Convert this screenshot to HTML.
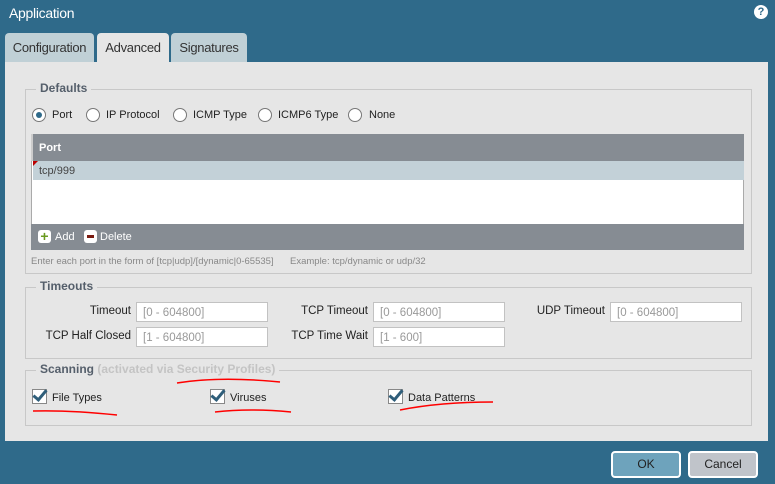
<html><head><style>
body{margin:0;width:775px;height:484px;background:#2f6a8a;font-family:"Liberation Sans",sans-serif;position:relative;overflow:hidden;font-size:11px;color:#222}
.a{position:absolute}
.tab{position:absolute;top:33px;height:29px;background:#c0d0d6;border-radius:4px 4px 0 0;font-size:13px;color:#333;text-align:center;line-height:29px;letter-spacing:-0.3px}
.fs{position:absolute;border:1px solid #c8c8c8}
.lg{position:absolute;top:-9px;left:10px;background:#e6e6e6;padding:0 4px;font-weight:bold;color:#555f6b;font-size:12px}
.rad{position:absolute;width:12px;height:12px;border:1px solid #777;border-radius:50%;background:#fff}
.inp{position:absolute;background:#fff;border:1px solid #c2c2c2;height:20px;line-height:20px;color:#999;padding-left:6px;box-sizing:border-box;font-size:11.5px}
.lbl{position:absolute;text-align:right;font-size:11.5px;color:#222}
.cb{position:absolute;width:13px;height:13px;border:1px solid #888;background:#fff}
.cb:after{content:"";position:absolute;left:3px;top:-3px;width:5px;height:11px;border:solid #2f5e7a;border-width:0 3px 3px 0;transform:rotate(40deg)}
.btn{position:absolute;top:451px;height:27px;border:2px solid #fff;border-radius:4px;box-sizing:border-box;text-align:center;line-height:23px;font-size:12px}
</style></head><body>
<div class="a" style="left:9px;top:5px;color:#fff;font-size:14px;letter-spacing:-0.3px">Application</div>
<div class="a" style="left:754px;top:5px;width:14px;height:14px;border-radius:50%;background:#fff;color:#2f6a8a;font-weight:bold;font-size:11px;text-align:center;line-height:14px">?</div>
<div class="tab" style="left:5px;width:89px">Configuration</div>
<div class="tab" style="left:97px;width:72px;background:#e6e6e6;height:30px">Advanced</div>
<div class="tab" style="left:171px;width:76px">Signatures</div>
<div class="a" style="left:5px;top:62px;width:763px;height:379px;background:#e6e6e6"></div>

<div class="fs" style="left:25px;top:89px;width:725px;height:183px"><div class="lg">Defaults</div></div>
<div class="rad" style="left:32px;top:108px"><div class="a" style="left:3px;top:3px;width:6px;height:6px;border-radius:50%;background:#2f6a8a"></div></div>
<div class="a" style="left:52px;top:109px">Port</div>
<div class="rad" style="left:86px;top:108px"></div><div class="a" style="left:106px;top:109px">IP Protocol</div>
<div class="rad" style="left:173px;top:108px"></div><div class="a" style="left:193px;top:109px">ICMP Type</div>
<div class="rad" style="left:258px;top:108px"></div><div class="a" style="left:278px;top:109px">ICMP6 Type</div>
<div class="rad" style="left:348px;top:108px"></div><div class="a" style="left:369px;top:109px">None</div>

<div class="a" style="left:31px;top:134px;width:713px;height:116px;background:#fff;border:1px solid #aaa;box-sizing:border-box"></div>
<div class="a" style="left:31px;top:134px;width:713px;height:27px;background:#868c93;color:#fff;font-weight:bold;line-height:28px;text-indent:6px;font-size:11px;border-left:2px solid #ccc;box-sizing:border-box">Port</div>
<div class="a" style="left:33px;top:161px;width:711px;height:19px;background:#c3d1d8;line-height:20px;text-indent:6px;color:#444">tcp/999</div>
<div class="a" style="left:33px;top:161px;width:0;height:0;border-top:5px solid #b00;border-right:5px solid transparent"></div>
<div class="a" style="left:31px;top:224px;width:713px;height:26px;background:#868c93"></div>
<div class="a" style="left:38px;top:230px;width:13px;height:13px;background:#fff;border-radius:3px;color:#6a9a20;font-weight:bold;text-align:center;line-height:13px;font-size:14px">+</div>
<div class="a" style="left:55px;top:231px;color:#fff">Add</div>
<div class="a" style="left:84px;top:230px;width:13px;height:13px;background:#fff;border-radius:3px"><div class="a" style="left:3px;top:5px;width:7px;height:3px;background:#7a1a10"></div></div>
<div class="a" style="left:100px;top:231px;color:#fff">Delete</div>
<div class="a" style="left:31px;top:256px;color:#888;font-size:9.5px">Enter each port in the form of [tcp|udp]/[dynamic|0-65535]</div>
<div class="a" style="left:290px;top:256px;color:#888;font-size:9.5px">Example: tcp/dynamic or udp/32</div>

<div class="fs" style="left:25px;top:287px;width:725px;height:70px"><div class="lg">Timeouts</div></div>
<div class="lbl" style="left:30px;width:101px;top:305px">Timeout</div>
<div class="inp" style="left:136px;top:302px;width:132px">[0 - 604800]</div>
<div class="lbl" style="left:30px;width:101px;top:330px">TCP Half Closed</div>
<div class="inp" style="left:136px;top:327px;width:132px">[1 - 604800]</div>
<div class="lbl" style="left:270px;width:98px;top:305px">TCP Timeout</div>
<div class="inp" style="left:373px;top:302px;width:132px">[0 - 604800]</div>
<div class="lbl" style="left:270px;width:98px;top:330px">TCP Time Wait</div>
<div class="inp" style="left:373px;top:327px;width:132px">[1 - 600]</div>
<div class="lbl" style="left:520px;width:85px;top:305px">UDP Timeout</div>
<div class="inp" style="left:610px;top:302px;width:132px">[0 - 604800]</div>

<div class="fs" style="left:25px;top:370px;width:725px;height:54px"><div class="lg">Scanning <span style="color:#c4c4c4">(activated via Security Profiles)</span></div></div>
<div class="cb" style="left:32px;top:389px"></div><div class="a" style="left:52px;top:392px">File Types</div>
<div class="cb" style="left:210px;top:389px"></div><div class="a" style="left:230px;top:392px">Viruses</div>
<div class="cb" style="left:388px;top:389px"></div><div class="a" style="left:408px;top:392px">Data Patterns</div>
<svg class="a" style="left:0;top:0" width="775" height="484"><g fill="none" stroke="red" stroke-width="1.5">
<path d="M177 383 Q220 376 280 382"/><path d="M33 411 Q70 410 117 415"/><path d="M215 412 Q250 408 291 412"/><path d="M400 410 Q440 402 493 402"/></g></svg>

<div class="btn" style="left:611px;width:70px;background:#6ea3bc">OK</div>
<div class="btn" style="left:688px;width:70px;background:#c0c4ca">Cancel</div>
</body></html>
